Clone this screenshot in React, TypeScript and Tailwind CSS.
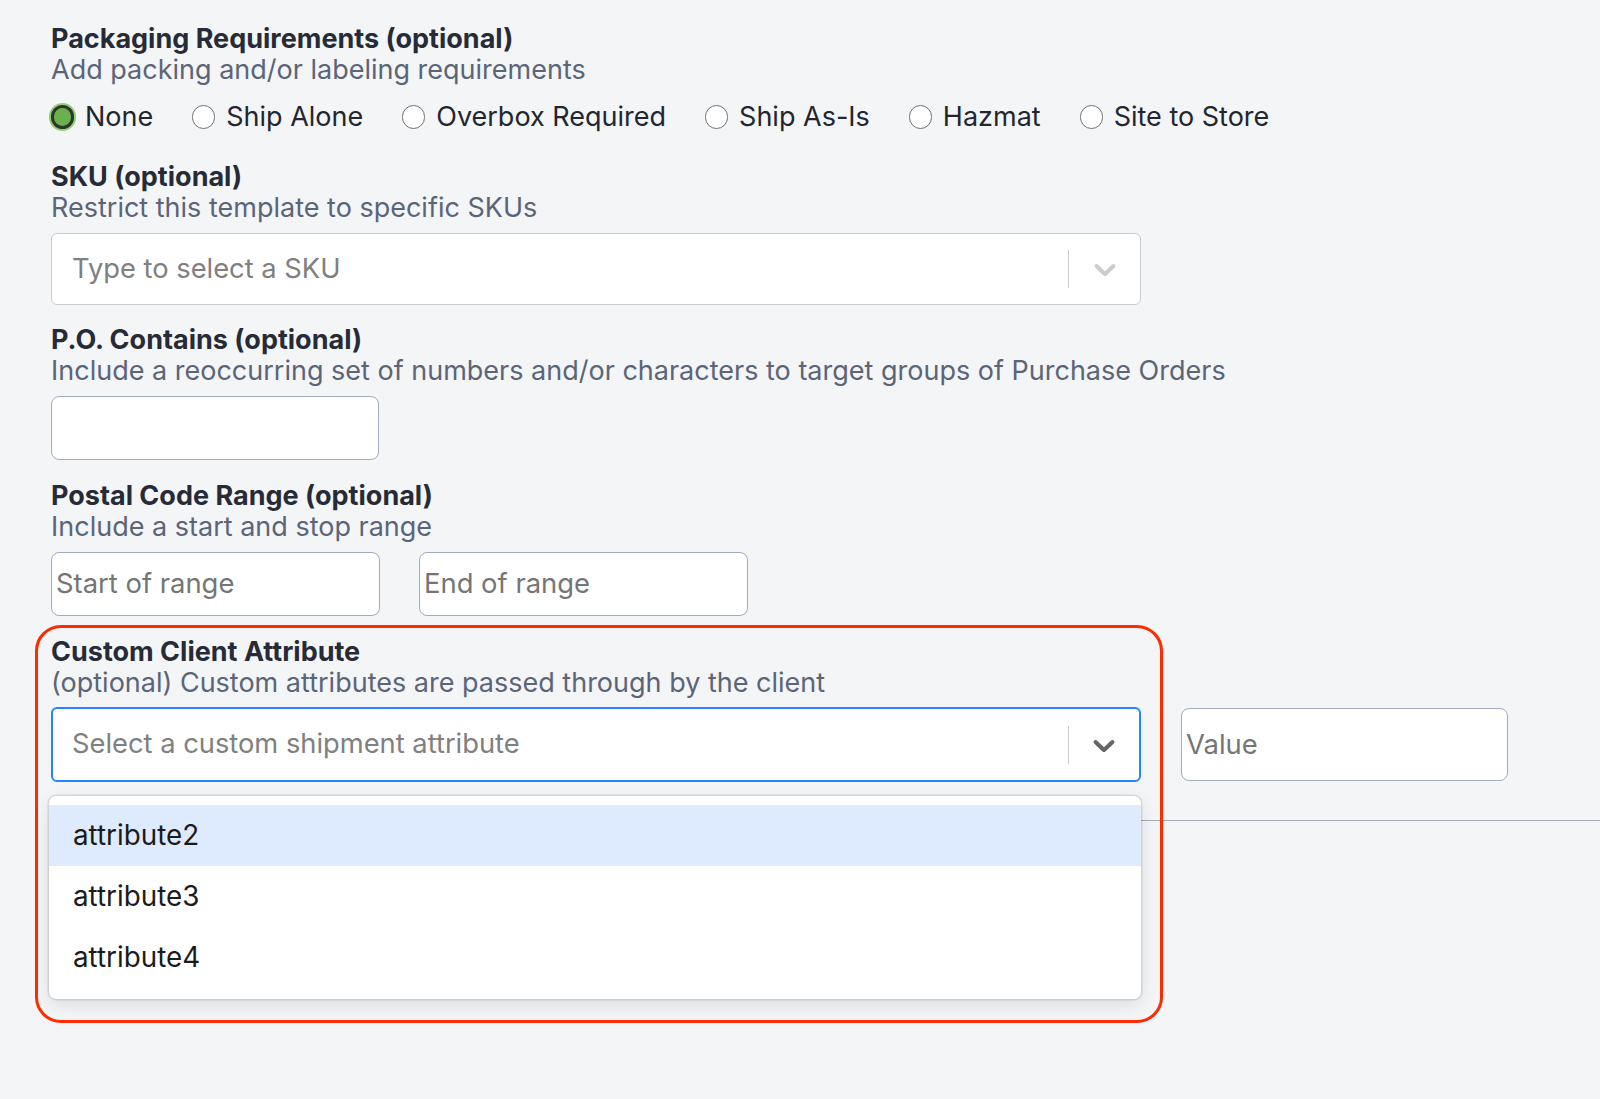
import React from 'react';

const packagingOptions = ['None', 'Ship Alone', 'Overbox Required', 'Ship As-Is', 'Hazmat', 'Site to Store'];
const attributeOptions = ['attribute2', 'attribute3', 'attribute4'];

const Chevron: React.FC<{ className?: string }> = ({ className }) => (
  <svg viewBox="0 0 20 20" className={className} fill="currentColor" aria-hidden="true">
    <path d="M4.516 7.548c0.436-0.446 1.043-0.481 1.576 0l3.908 3.747 3.908-3.747c0.533-0.481 1.141-0.446 1.574 0 0.436 0.445 0.408 1.197 0 1.615-0.406 0.418-4.695 4.502-4.695 4.502-0.217 0.223-0.502 0.335-0.787 0.335s-0.57-0.112-0.789-0.335c0 0-4.287-4.084-4.695-4.502s-0.436-1.17 0-1.615z" />
  </svg>
);

const FieldHeader: React.FC<{ title: string; hint: string }> = ({ title, hint }) => (
  <div>
    <div className="text-[27px] leading-[30px] font-bold text-[#272b37]">{title}</div>
    <div className="text-[27px] leading-[31px] text-[#5b6579]">{hint}</div>
  </div>
);

const Radio: React.FC<{ label: string; checked?: boolean }> = ({ label, checked }) => (
  <label className="flex items-center gap-[11px]">
    {checked ? (
      <span className="w-[23px] h-[24px] rounded-full bg-[#6ab04c] border-[3px] border-[#2f3430] ring-2 ring-[#8fd16f]" />
    ) : (
      <span className="w-[23px] h-[24px] rounded-full bg-white border-[1.5px] border-[#6f6f6f]" />
    )}
    <span className="text-[27px] leading-[30px] text-[#23262f]">{label}</span>
  </label>
);

const App: React.FC = () => {
  return (
    <div className="min-h-[1099px] bg-[#f4f5f7] font-[family-name:Inter,sans-serif] pt-[24px] pl-[51px] overflow-hidden">
      {/* Packaging requirements */}
      <FieldHeader title="Packaging Requirements (optional)" hint="Add packing and/or labeling requirements" />
      <div className="flex items-center gap-[39px] mt-[17px] h-[30px]">
        {packagingOptions.map((opt, i) => (
          <Radio key={opt} label={opt} checked={i === 0} />
        ))}
      </div>

      {/* SKU */}
      <div className="mt-[30px]">
        <FieldHeader title="SKU (optional)" hint="Restrict this template to specific SKUs" />
        <div className="mt-[10px] w-[1090px] h-[72px] bg-white border border-[#cccccc] rounded-[6px] flex items-center">
          <div className="flex-1 pl-[20px] text-[27.3px] text-[#808080]">Type to select a SKU</div>
          <div className="w-px h-[38px] bg-[#cccccc]" />
          <div className="w-[71px] flex justify-center text-[#cccccc]">
            <Chevron className="w-[36px] h-[36px]" />
          </div>
        </div>
      </div>

      {/* P.O. */}
      <div className="mt-[20px]">
        <FieldHeader
          title="P.O. Contains (optional)"
          hint="Include a reoccurring set of numbers and/or characters to target groups of Purchase Orders"
        />
        <div className="mt-[10px] w-[328px] h-[64px] bg-white border-[1.5px] border-[#a3acbd] rounded-[8px]" />
      </div>

      {/* Postal code */}
      <div className="mt-[21px]">
        <FieldHeader title="Postal Code Range (optional)" hint="Include a start and stop range" />
        <div className="mt-[10px] flex gap-[39px]">
          <div className="w-[329px] h-[64px] bg-white border-[1.5px] border-[#a3acbd] rounded-[8px] flex items-center pl-[4px] text-[27.4px] text-[#757575]">
            Start of range
          </div>
          <div className="w-[329px] h-[64px] bg-white border-[1.5px] border-[#a3acbd] rounded-[8px] flex items-center pl-[4px] text-[27.4px] text-[#757575]">
            End of range
          </div>
        </div>
      </div>

      {/* Custom client attribute */}
      <div className="mt-[21px] relative">
        <div className="absolute top-[-12px] left-[-16px] w-[1128px] h-[398px] border-[3px] border-[#ff2a00] rounded-[26px] pointer-events-none z-20" />
        <FieldHeader title="Custom Client Attribute" hint="(optional) Custom attributes are passed through by the client" />
        <div className="mt-[9px] flex gap-[40px] relative">
          <div className="w-[1090px] h-[75px] bg-white border-2 border-[#2684ff] rounded-[6px] flex items-center">
            <div className="flex-1 pl-[19px] text-[27.3px] text-[#808080]">Select a custom shipment attribute</div>
            <div className="w-px h-[38px] bg-[#cccccc]" />
            <div className="w-[70px] flex justify-center text-[#666666]">
              <Chevron className="w-[36px] h-[36px]" />
            </div>
          </div>
          <div className="w-[327px] h-[73px] mt-px bg-white border-[1.5px] border-[#a3acbd] rounded-[8px] flex items-center pl-[4px] text-[27.4px] text-[#757575]">
            Value
          </div>

          {/* open menu */}
          <div className="absolute left-[-2px] top-[89px] w-[1092px] bg-white rounded-[7px] pt-[9px] pb-[11px] z-10 shadow-[0_0_0_1.5px_rgba(0,0,0,0.1),0_6px_18px_rgba(0,0,0,0.1)]">
            {attributeOptions.map((opt, i) => (
              <div
                key={opt}
                className={
                  i === 0
                    ? 'h-[61px] flex items-center pl-[24px] text-[27.8px] text-[#1b1b1b] bg-[#deebff]'
                    : 'h-[61px] flex items-center pl-[24px] text-[27.8px] text-[#1b1b1b]'
                }
              >
                {opt}
              </div>
            ))}
          </div>
        </div>
        <div className="mt-[38px] border-t-[1.5px] border-[#a3a9b5]" />
      </div>
    </div>
  );
};

export default App;
